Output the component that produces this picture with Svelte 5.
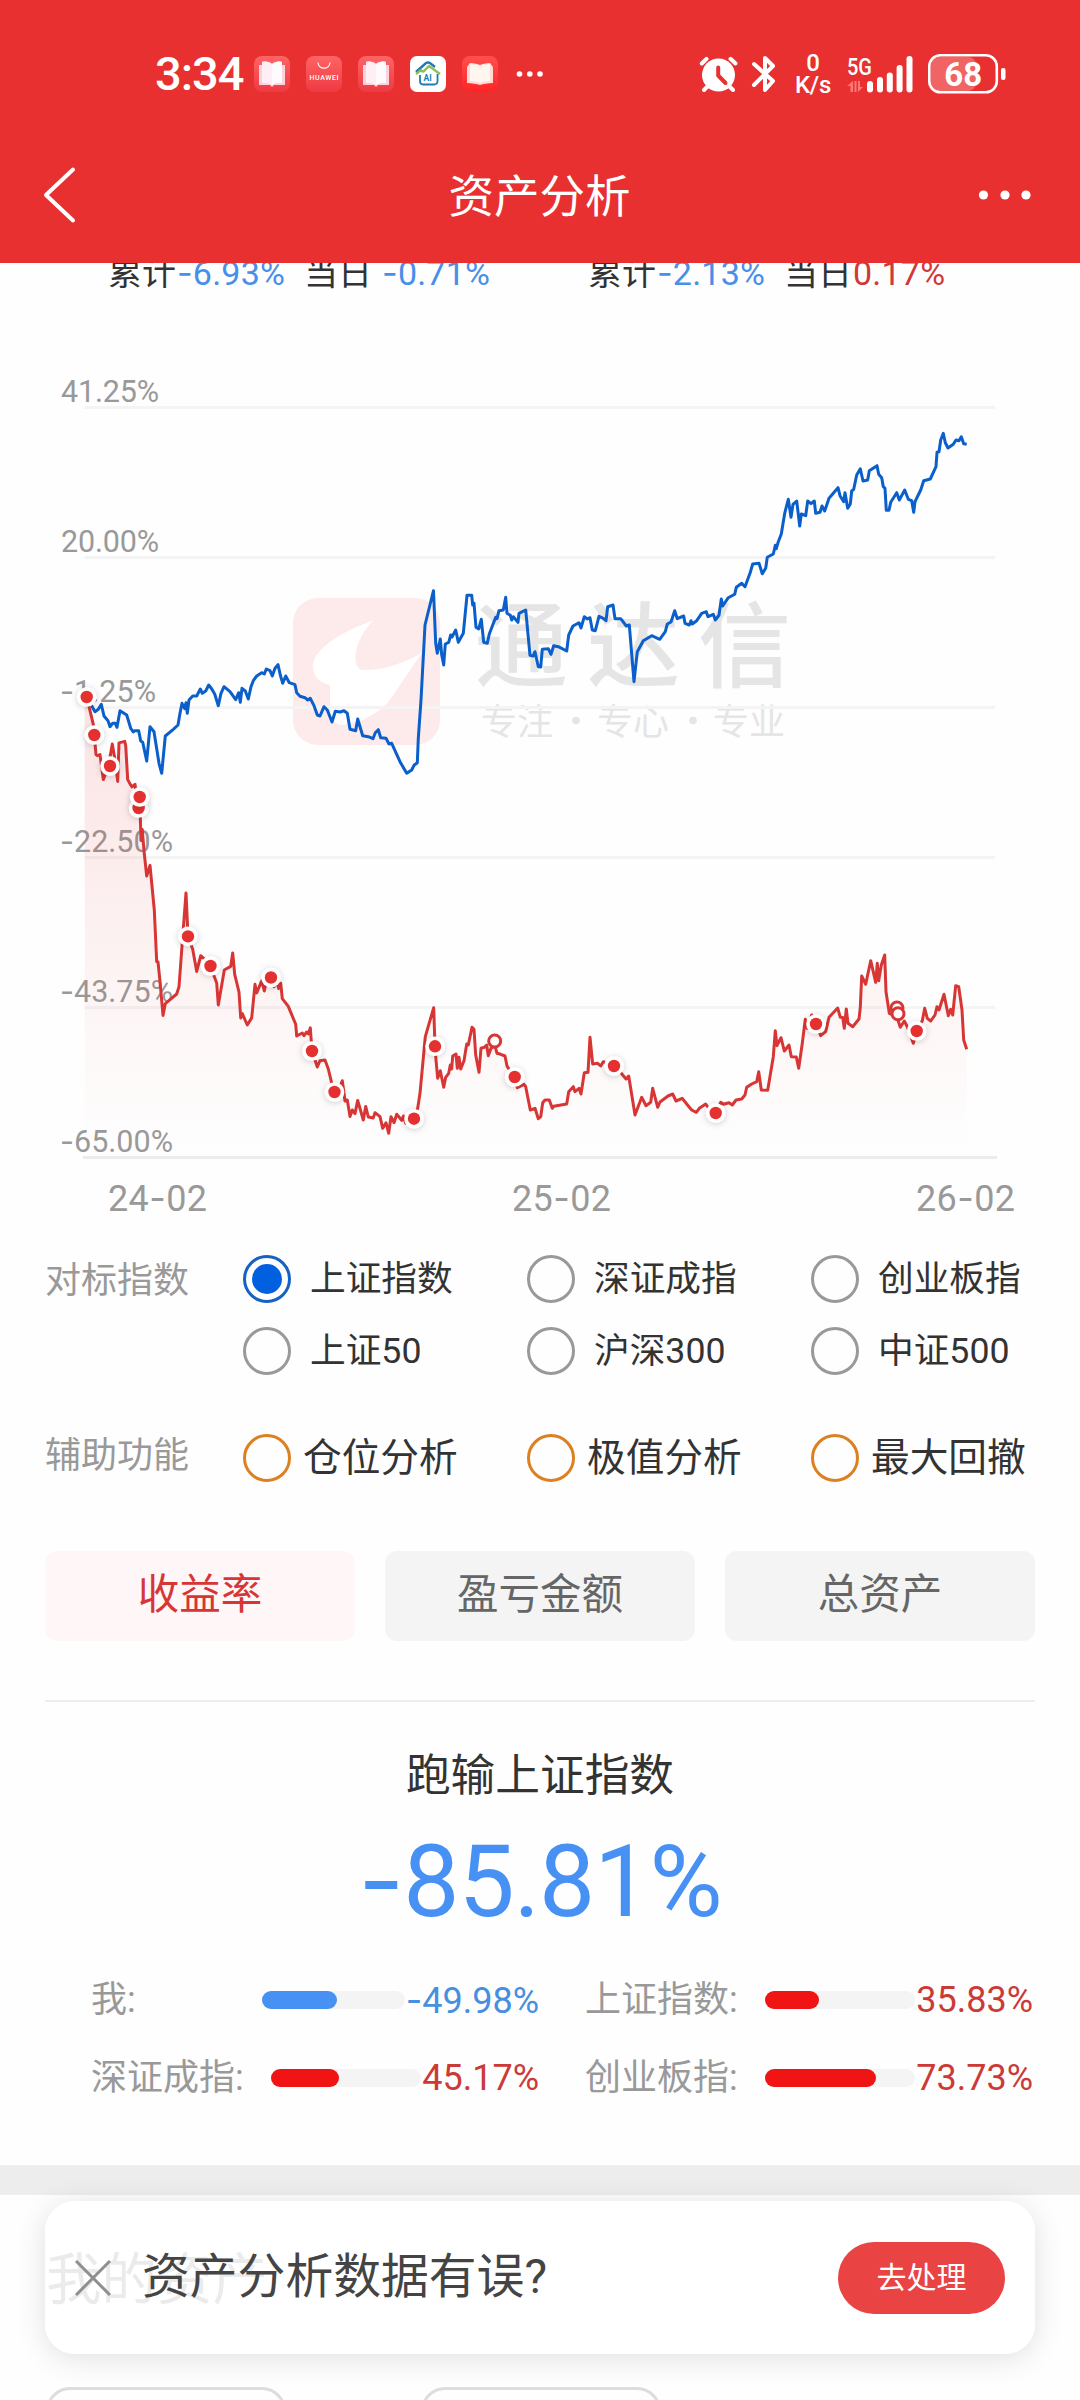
<script>
    let benchmark = 'sh';
    let tab = 'rate';

    const benchmarks = [
        { id: 'sh', name: '上证指数' },
        { id: 'sz', name: '深证成指' },
        { id: 'cy', name: '创业板指' },
        { id: 'sh50', name: '上证50' },
        { id: 'hs300', name: '沪深300' },
        { id: 'zz500', name: '中证500' }
    ];
    const tools = ['仓位分析', '极值分析', '最大回撤'];
    const tabs = [
        { id: 'rate', name: '收益率' },
        { id: 'profit', name: '盈亏金额' },
        { id: 'total', name: '总资产' }
    ];
    const results = [
        { name: '我:', value: -49.98, fill: 52.5 },
        { name: '上证指数:', value: 35.83, fill: 36 },
        { name: '深证成指:', value: 45.17, fill: 45.5 },
        { name: '创业板指:', value: 73.73, fill: 74 }
    ];

    // Chart labels
    const yAxis = [
        { y: 407.5, value: 41.25, width: 98 },
        { y: 557.5, value: 20, width: 98 },
        { y: 707.5, value: -1.25, width: 96 },
        { y: 857.5, value: -22.5, width: 113 },
        { y: 1007.5, value: -43.75, width: 113 },
        { y: 1157.5, value: -65, width: 113 }
    ];
    const xAxis = [
        { x: 108, year: '24', month: '02' },
        { x: 512, year: '25', month: '02' },
        { x: 916, year: '26', month: '02' }
    ];

    const percent = (value) => Math.abs(value).toFixed(2) + '%';

    // Index line
    const indexLine = `86.7,697 95,711.7 98.3,709.3 101.3,704.3 104,716 108,720.7 110,726.7 112.7,723.3 115.3,723.3 117,727.3
        120,710.7 126.7,715 130.7,728.3 133.3,732 134.7,730.7 138.7,730.7 140.7,741 142.7,742.3 146.7,761 150,726.7
        154,731.7 159,763.3 161.7,773.3 165.3,736 173.3,729.3 178,725 180,713.3 182,703.3 184.7,708.7 186,702.7
        187.3,713.3 189,700 192.7,696 196.7,696 200.3,689 202.3,693.3 205.7,691 208.7,685 211.3,688.3 214.7,694
        218.3,705.7 221,693.3 224,686.7 230,691.7 235.7,699.7 238.7,692.7 240.3,702.3 242,688.3 245.3,691 248.3,699
        251,686.7 253.3,680.7 256.7,676 261.7,672.7 264.3,674 266.3,669 270,670.7 272.3,676 275,668.3 278,664.7
        280.3,675 282.7,683.3 285.7,676 289.3,682.7 295,684.7 296.7,692.7 300,696.3 305,697.7 307.7,700 310.3,698.3
        314,705.7 317.3,715 320,716 324,706.7 327.3,710 332,722 335.3,711.3 340,712 344,710.7 347.3,713.3
        350,729.3 355.7,730.7 357.7,719 362.7,735.7 368.3,736.7 373,738.7 375.3,732.7 378.3,729.7 380.7,737.7 386,738.3
        389,744 391.7,743.3 400,761.7 406.7,773.3 411.7,770 414,765.3 417.3,762.7 418.3,738.3 421,700 425,625
        433.5,590.7 435.7,643.3 437.3,653.3 440.3,639 441.7,655 443.7,665 445.3,644 448.7,642.3 450.7,635 452,637 455.7,630
        458.3,642.3 463.3,633.3 467,595.3 471.7,595.3 472.7,605 474,603.3 476,627.3 478.7,629 481.3,619.3 483.7,642.3
        487.3,643.3 489.3,634 495.7,617.3 497,618.7 499,610.7 503.3,610 505.7,597.3 507,613.3 510.3,615.3 511.7,620
        513.3,616.7 518,622.3 519,613.3 525.7,610 530,655.3 533,656 535,651.7 538.3,666.7 540.7,667 542.3,649.3
        548.3,648.7 551,654.3 553.7,645.7 558.3,646.7 566.7,651 568.7,635 573,626 579,622.7 581,628 584.3,616.7
        587.3,619 590,617.7 592.3,630 595.3,630.7 599,616.3 603.3,618.3 606,620.7 607.7,606.7 613,605 615,618.7
        620.7,618.7 626.3,626 629.3,625 634,681.7 637.3,651.7 643.3,640.7 651.7,635.7 659.7,639.3 665.3,631.7 667.3,624
        671,622 674.7,610.7 677.3,618.7 683.7,616 685,623.3 689.3,625 691,620.7 692.3,624 696.7,620.7 701.7,613.3
        706.3,611.7 708,616.7 713.3,614.3 715.3,620 719,615.3 721.3,599 722.7,606 728.3,597.7 734.7,594.3 736.3,587.3
        741.7,583.3 745,586.7 750,573.3 752.7,564 759,563.3 762.3,573.7 765.7,568.3 767.3,557.3 773.3,554 775.3,545.3
        776.3,548.7 778.3,541.7 781.3,534 784.7,513.3 788.3,499.3 791,517.3 793,504.3 796.7,501 799.7,526 801.3,514
        805.7,515.7 807.7,501 811,503.7 814.3,501 815.7,513.3 820,512.3 822,506 824.7,511 829,498.3 838,487.7
        840,495.7 843.7,501.7 845,492.7 847.7,508.3 850.3,504 851.7,491 853.7,489.3 856.7,475 860.3,468.7 863,481
        867.7,480 869.3,470.7 877,465.7 878.7,474.3 881.7,477.7 883.3,486.7 885,488.3 886.3,510.3 889,510.3 890.7,502.3
        896.7,492.7 899.3,500 904.7,490 908.3,499.3 911.7,500.7 913.7,512.3 915,501.7 920.7,490 923.7,480.7 930.3,479
        936,466.7 937,452.3 939,451.7 940.7,440 943.3,433.3 945.3,442.7 948,448 953.3,444.3 956,440 959,440.7
        961.3,436.7 963.7,443.7 966.7,444.3`;

    // My return line
    const myLine = `86.7,697 93.3,724.3 94.3,735 96,754.6 97.3,755.7 100,754.6 103.3,779.6 108.3,767 112.3,743.9 115.3,761.8
        117.7,781.4 119,742.9 124.7,741.4 125.7,745.7 127.7,779.6 130,783.9 132,786.8 135,784.3 136.7,797.5 139,807.9
        139.7,797.5 140.3,817 141,840.4 142.3,829.6 144,851 146.7,876 150,865.4 154.3,910 156.7,961.8 158,961.8
        160,981.4 163,1015.4 165.3,1003.6 176.7,994 179,986.8 182.3,942 186,892.9 188,936.4 192.7,949.3 196.7,971.4
        200.7,955.7 203.3,958 210.3,966 216.7,983 218.3,1005 224.3,970 230.7,966.4 232.7,952.9 234.7,974.3 239,992
        240.7,1017.9 242.3,1013.6 247.3,1025 251.7,1017.9 255,984.3 256.7,992.9 261.7,980.7 264.3,991 266.7,979.6 271,977.5
        274,986.8 276.5,980 278.7,988.6 280.7,983.2 282.3,998.6 288.3,1006.4 295.7,1024.3 296.7,1036 302.3,1033 304,1035.7
        306.7,1032 308.5,1034 310.3,1027.9 312,1051 315,1060 317.3,1067 320,1060.7 325,1060 328.3,1069 331.7,1083
        334.3,1092 340,1086.8 342.3,1080.7 345,1101 347.3,1100 350,1116.4 352.3,1110 355,1113.6 357.7,1100.4 363.3,1120
        365.7,1106.4 368.3,1117 373.3,1117.9 375,1112.7 380,1116.7 382.7,1128.3 386,1122.7 388.7,1133.3 391,1116.7 394,1122.7
        396.7,1114.3 401.7,1120.3 403.5,1116 405.7,1123.3 409,1116.7 414,1118.7 417.7,1108.3 420,1093.3 425.3,1036.7 433.7,1007.7
        435,1046.3 436,1060 437.7,1078.3 440.3,1070.7 443.7,1087.3 445.7,1077.3 448.7,1073.3 450.3,1065 451.7,1069 452.7,1056
        456,1054 457.3,1068.3 459,1057.3 460.7,1069 464,1060.7 466.7,1044 468.3,1045 472,1027.3 474,1029.3 475.7,1055
        479,1072.3 481,1048.3 484.3,1047.3 486.7,1045 488.3,1055.7 491,1048.3 495,1046 497,1053.3 500.7,1054.3 505,1056
        507,1066 509,1069.3 514.7,1077 517.3,1087.7 524,1084.3 525.7,1086.7 530.3,1110 535,1108.3 538.3,1118.7 540.7,1116.7
        542.7,1102.7 545,1100 549.3,1100 552.3,1108.3 553.7,1106.3 566.7,1104 568.7,1091.7 573.3,1086.7 575,1091.7 579,1088.3 581,1094
        584.3,1072.7 588,1072.3 590,1037.3 592.7,1064 597.7,1063.3 600.7,1066 603.3,1061.7 614,1066 620,1071.7 622.7,1075
        626,1079 628.7,1076 635,1115 641.7,1097.3 646,1105.7 650.7,1102.3 652.7,1088.3 657.7,1107.3 660,1102 668,1096 672.7,1094
        676,1101 682.3,1098.3 688.3,1106 691.7,1110 696.3,1112.3 699.3,1108.3 705.7,1104 710,1110 715.7,1113 720.7,1102.3
        723.3,1104.3 729,1102.7 732.3,1105 736,1100 741.7,1099 745,1095 746.7,1087.3 751.7,1084 756.7,1081.7 758.7,1071.7
        761.3,1090 767.7,1090.3 773.3,1056.7 775.3,1030.7 777,1045.7 781,1037.7 784.3,1051 789,1045 791.3,1056.7 796.3,1057
        798.7,1068.3 802.3,1043.3 805.3,1019.3 807.3,1028.3 811.7,1015 816,1024 820.7,1035.7 825.7,1031.7 829,1017.3 837.7,1008
        840.3,1017.3 842.7,1017.5 844.3,1028.3 846.3,1009 848,1023.3 852.7,1026.7 859,1019 860.3,1007.3 861.7,976 865.7,984.3
        870.7,960.7 875.7,982.3 877.3,963.3 878.7,980.7 881.3,965 884.7,955 886,991.7 889.3,1013.3 893.3,1015 897.3,1018.3
        900.3,1027.3 904.3,1021 907.3,1026.7 913.3,1043.3 916.7,1031 922.3,1020.7 924.7,1008.3 927.3,1018.3 930.7,1021 935,1015
        937,1006.7 939,1010 944,994.3 948.3,1015.7 950.7,1009.3 952.7,1015 955.7,985.7 958.7,986.7 962,1010 963.7,1040 966.7,1049.3`;

    const trades = [
        [86.7, 697], [94.3, 735], [110, 766], [138.6, 808], [139.7, 797], [188, 936.4], [210.5, 966], [271, 977.5],
        [312, 1051], [334.5, 1092], [414, 1118.7], [435, 1046.3], [514.7, 1077], [614, 1066], [715.7, 1113],
        [816, 1024], [916.7, 1031]
    ];
    const transfers = [[494.7, 1041], [897, 1008], [898, 1013.7]];
</script>

<div class="page">
    <header>
        <div class="status">
            <span class="time">3:34</span>
            <div class="apps">
                {#each ['book', 'huawei', 'book', 'home', 'read'] as app}
                    <svg width="36" height="36" viewBox="0 0 36 36">
                        {#if app === 'book'}
                            <rect width="36" height="36" rx="8" fill="url(#appBg)" />
                            <path d="M5 9H8V6C12 5 16 6 18 8C20 6 24 5 28 6V9H31V29H20L18 31L16 29H5Z" fill="#fbd3de" />
                            <path d="M8 6C12 5 16 6 18 8V29C15 27 11 27 8 27Z" fill="#ffeef4" />
                            <path d="M28 6C24 5 20 6 18 8V29C21 27 25 27 28 27Z" fill="#fffafc" />
                        {:else if app === 'huawei'}
                            <rect width="36" height="36" rx="8" fill="url(#appBg)" />
                            <path d="M12 6.500C12.500 14 23.500 14 24 6.500" fill="none" stroke="#fff" stroke-width="1.200" />
                            <text x="3.500" y="23.500" font-size="7" font-weight="500" fill="#fff" textLength="29">HUAWEI</text>
                        {:else if app === 'home'}
                            <rect width="36" height="36" rx="7" fill="#fff" />
                            <path d="M6 16L16 7Q18 6 20 7L25 11" fill="none" stroke="#1f78b8" stroke-width="2.400" />
                            <path d="M6 18L11 14Q13 17 15 14L19 10L30 18" fill="none" stroke="#8cc152" stroke-width="2.400" />
                            <path d="M10 19V25Q10 28.500 13 28.500H24Q27.500 28.500 27.500 25V18" fill="none" stroke="#1b7fb5" stroke-width="1.800" />
                            <text x="13.500" y="25" font-size="8.500" font-weight="700" fill="#1b7fb5">AI</text>
                        {:else}
                            <rect width="36" height="36" rx="8" fill="url(#readBg)" />
                            <path d="M5 11L8 7C12 7 16 8 18 9C20 8 24 7 28 7L31 11V27C26 27 21 28 18 29C15 28 10 27 5 27Z" fill="#ffd9d3" />
                            <path d="M8 8C12 8 16 9 18 10C20 9 24 8 28 8V25C24 25 20 26 18 27C16 26 12 25 8 25Z" fill="#fff6ef" />
                        {/if}
                        <defs>
                            <linearGradient id="appBg" x1="0" y1="0" x2="0" y2="1">
                                <stop offset="0" stop-color="#ff6464" />
                                <stop offset="1" stop-color="#ef3a42" />
                            </linearGradient>
                            <linearGradient id="readBg" x1="0" y1="0" x2="0" y2="1">
                                <stop offset="0" stop-color="#ff4f4f" />
                                <stop offset="1" stop-color="#ff2424" />
                            </linearGradient>
                        </defs>
                    </svg>
                {/each}
                <svg width="30" height="8" viewBox="0 0 30 8" fill="#fff">
                    <circle cx="5.500" cy="4" r="2.800" />
                    <circle cx="15.800" cy="4" r="2.800" />
                    <circle cx="26" cy="4" r="2.800" />
                </svg>
            </div>
            <div class="system">
                <svg class="alarm" width="40" height="38" viewBox="0 0 40 38" fill="none" stroke="#fff" stroke-linecap="round">
                    <circle cx="19.500" cy="20" r="16.500" fill="#fff" stroke="none" />
                    <path d="M2.800 8.500L7.500 3.800M36.500 8.500L31.500 3.800M9 31L5 35M30 31L34 35" stroke-width="4" />
                    <path d="M19.200 12.500V20.500L26.500 28" stroke="#e83030" stroke-width="4" stroke-linejoin="round" />
                </svg>
                <svg class="bt" width="26" height="40" viewBox="0 0 26 40" fill="none" stroke="#fff" stroke-width="4" stroke-linecap="round" stroke-linejoin="round">
                    <path d="M3 10L22 27L14 36V4L22 12L3 31" />
                </svg>
                <div class="speed"><span>0</span><span>K/s</span></div>
                <svg class="signal" width="68" height="40" viewBox="0 0 68 40" fill="#fff">
                    <text x="0" y="20.500" font-size="24" font-weight="500" textLength="25" lengthAdjust="spacingAndGlyphs">5G</text>
                    <path d="M0 32L6 27V38H3.500V32ZM7.500 27H9.500V38H7.500ZM11 27H13V33H16L11 38Z" fill="#f77" />
                    <rect x="20" y="27" width="6" height="11.500" rx="3" />
                    <rect x="30" y="23" width="6" height="15.500" rx="3" />
                    <rect x="39.800" y="18.500" width="6" height="20" rx="3" />
                    <rect x="49.600" y="11" width="6" height="27.500" rx="3" />
                    <rect x="59.500" y="2" width="6" height="36.500" rx="3" />
                </svg>
                <svg class="battery" width="78" height="40" viewBox="0 0 78 40">
                    <rect x="3" y="3" width="45" height="34" rx="8" fill="#f06464" />
                    <rect x="1.300" y="1.300" width="67.500" height="37" rx="11" fill="none" stroke="#fff" stroke-width="2.600" />
                    <rect x="73" y="14" width="4.500" height="12" rx="2" fill="#fff" />
                    <text x="35.300" y="32" font-size="33" font-weight="700" fill="#fff" text-anchor="middle">68</text>
                </svg>
            </div>
        </div>
        <nav>
            <svg width="34" height="58" viewBox="0 0 34 58" fill="none" stroke="#fff" stroke-width="4" stroke-linecap="round" stroke-linejoin="round">
                <path d="M30 3.500L3 29L30 54.500" />
            </svg>
            <h1>资产分析</h1>
            <svg width="54" height="12" viewBox="0 0 54 12" fill="#fff">
                <circle cx="5.500" cy="6" r="4.600" />
                <circle cx="27" cy="6" r="4.600" />
                <circle cx="48" cy="6" r="4.600" />
            </svg>
        </nav>
    </header>

    <div class="summary">
        <p>累计<span class="down"><b>-</b>6.93%</span><i></i>当日<i class="thin"></i><span class="down"><b>-</b>0.71%</span></p>
        <p>累计<span class="down"><b>-</b>2.13%</span><i></i>当日<span class="up">0.17%</span></p>
    </div>

    <svg class="chart" width="1080" height="900" viewBox="0 340 1080 900">
        <defs>
            <linearGradient id="area" gradientUnits="userSpaceOnUse" x1="0" y1="697" x2="0" y2="1157">
                <stop offset="0" stop-color="#e93030" stop-opacity="0.13" />
                <stop offset="1" stop-color="#e93030" stop-opacity="0" />
            </linearGradient>
            <filter id="glow" x="-60%" y="-60%" width="220%" height="220%">
                <feDropShadow dx="0" dy="1" stdDeviation="3" flood-color="#000" flood-opacity="0.2" />
            </filter>
        </defs>

        <!-- watermark -->
        <rect x="293" y="598" width="147" height="147" rx="25" fill="#fdeaea" />
        <path d="M372.700 620.700C345 630 313 648 313 666C313 680 325 684 330 685V712Q331 724 342 725C362 723 380 712 390 700L421.700 653C400 665 380 671 362 670C350 665 355 640 372.700 620.700Z" fill="#fff" />
        <text class="brand" x="475 587 698" y="680">通达信</text>
        <g class="slogan">
            <text x="481" y="735">专注</text>
            <circle cx="576" cy="720.500" r="3.800" />
            <text x="597" y="735">专心</text>
            <circle cx="693" cy="720.500" r="3.800" />
            <text x="713" y="735">专业</text>
        </g>

        {#each yAxis as row, i}
            <line x1={i === 5 ? 83 : 84.7} x2={i === 5 ? 997 : 995} y1={row.y} y2={row.y} class="grid" class:base={i === 5} />
            <text class="y-label" x={row.value < 0 ? 60 : 61} y={row.y - 5.5} textLength={row.width}>{#if row.value < 0}<tspan class="dash">-</tspan>{/if}{percent(row.value)}</text>
        {/each}
        {#each xAxis as col}
            <text class="x-label" x={col.x} y="1211" textLength="99">{col.year}<tspan class="dash">-</tspan>{col.month}</text>
        {/each}

        <polygon points={`84.7,1157 84.7,697 ${myLine} 966.7,1157`} fill="url(#area)" />
        <polyline points={indexLine} class="line" stroke="#0b5fcb" />
        <polyline points={myLine} class="line" stroke="#d83535" />
        {#each trades as [x, y]}
            <circle cx={x} cy={y} r="9.800" fill="#fff" filter="url(#glow)" />
            <circle cx={x} cy={y} r="6.200" fill="#e53030" />
        {/each}
        {#each transfers as [x, y]}
            <circle cx={x} cy={y} r="6" fill="#fff" stroke="#d83535" stroke-width="3" />
        {/each}
    </svg>

    <section class="options">
        <h2>对标指数</h2>
        <div class="choices">
            {#each benchmarks as item}
                <button class="choice" class:active={benchmark === item.id} on:click={() => (benchmark = item.id)}>
                    <span class="radio"></span>{item.name}
                </button>
            {/each}
        </div>
    </section>
    <section class="options tools">
        <h2>辅助功能</h2>
        <div class="choices">
            {#each tools as tool}
                <button class="choice tool"><span class="radio"></span>{tool}</button>
            {/each}
        </div>
    </section>

    <div class="tabs">
        {#each tabs as item}
            <button class:active={tab === item.id} on:click={() => (tab = item.id)}>{item.name}</button>
        {/each}
    </div>

    <section class="result">
        <h3>跑输上证指数</h3>
        <div class="total"><b>-</b>85.81%</div>
        <div class="bars">
            {#each results as row}
                <div class="bar-row" class:minus={row.value < 0}>
                    <span class="name">{row.name}</span>
                    <div class="bar"><div class="fill" style="width: {row.fill}%"></div></div>
                    <span class="value">{#if row.value < 0}<b>-</b>{/if}{percent(row.value)}</span>
                </div>
            {/each}
        </div>
    </section>

    <section class="assets">
        <h2>我的资产</h2>
        <div class="cards"><div></div><div></div></div>
    </section>

    <div class="toast">
        <svg width="36" height="36" viewBox="0 0 36 36" stroke="#8f8f8f" stroke-width="3">
            <path d="M1 1L35 35M35 1L1 35" />
        </svg>
        <p>资产分析数据有误?</p>
        <button>去处理</button>
    </div>
</div>

<style>
    :global(body) {
        background: #fefefe;
    }

    .page {
        position: relative;
        width: 1080px;
        height: 2400px;
        overflow: hidden;
        background: #fefefe;
        color: #333;
        font-family: Roboto, "Noto Sans CJK SC", sans-serif;
    }

    h1, h2, h3, p {
        margin: 0;
        font-weight: 400;
    }

    button {
        padding: 0;
        border: none;
        background: none;
        font-family: inherit;
        color: inherit;
    }

    /* wide minus sign */
    b, .dash {
        font-family: Inter, sans-serif;
        font-weight: 400;
    }

    /* Header */
    header {
        height: 263px;
        box-sizing: border-box;
        padding-top: 44px;
        background: #e83030;
        color: #fff;
    }

    .status {
        display: flex;
        align-items: center;
        height: 60px;
        margin-bottom: 44px;
        padding: 0 74px 0 155px;
    }

    .time {
        width: 99px;
        font-size: 47px;
        font-weight: 500;
        line-height: 60px;
        letter-spacing: -1px;
    }

    .apps {
        display: flex;
        align-items: center;
        gap: 16px;
    }

    .system {
        display: flex;
        align-items: center;
        margin-left: auto;
    }

    .alarm {
        margin-right: 12px;
    }

    .bt {
        margin-right: 16px;
    }

    .speed {
        display: flex;
        flex-direction: column;
        align-items: center;
        width: 40px;
        margin-right: 14px;
        font-size: 24px;
        font-weight: 500;
        line-height: 22px;
        letter-spacing: -0.3px;
    }

    .signal {
        margin-right: 13px;
    }

    nav {
        display: flex;
        align-items: center;
        justify-content: space-between;
        height: 94px;
        padding: 0 48px 0 43px;
    }

    h1 {
        margin-right: -24px;
        padding-top: 5px;
        font-size: 45.5px;
        line-height: 89px;
    }

    /* Scrolled summary under the header */
    .summary {
        display: flex;
        height: 77px;
        overflow: hidden;
        font-size: 34px;
        line-height: 40px;
    }

    .summary p {
        display: flex;
        flex: none;
        width: 480px;
        margin-top: -10px;
        padding-left: 108px;
        box-sizing: border-box;
        white-space: nowrap;
    }

    .summary span {
        margin-left: 1px;
        letter-spacing: 0.2px;
    }

    .summary i {
        flex: none;
        width: 19px;
    }

    .summary .thin {
        width: 9px;
    }

    .down {
        color: #478fe8;
    }

    .up {
        color: #cf3a38;
    }

    /* Chart */
    .chart {
        display: block;
    }

    .grid {
        stroke: #f4f4f4;
        stroke-width: 3;
    }

    .base {
        stroke: #ececec;
    }

    .line {
        fill: none;
        stroke-width: 3;
        stroke-linejoin: round;
    }

    .y-label {
        font-size: 30.5px;
        fill: #999;
    }

    .x-label {
        font-size: 36px;
        fill: #999;
    }

    .brand {
        font-size: 93px;
        font-weight: 500;
        fill: #e5e5e5;
    }

    .slogan {
        font-size: 36px;
        fill: #e5e5e5;
    }

    /* Options */
    .options {
        display: flex;
        padding: 0 0 0 45px;
    }

    .options h2 {
        flex: none;
        width: 198px;
        font-size: 36px;
        line-height: 83px;
        color: #999;
    }

    .choices {
        display: grid;
        flex: none;
        grid-template-columns: repeat(3, 284px);
        grid-auto-rows: 72px;
        padding-top: 3px;
    }

    .choice {
        display: flex;
        align-items: center;
        gap: 19px;
        font-size: 35.7px;
        line-height: 68px;
        white-space: nowrap;
    }

    .radio {
        display: flex;
        width: 42px;
        height: 42px;
        flex: none;
        border: 3px solid #999;
        border-radius: 50%;
    }

    .active .radio {
        border-color: #1561c4;
    }

    .active .radio::after {
        content: '';
        width: 30px;
        height: 30px;
        margin: auto;
        border-radius: 50%;
        background: #0060e0;
    }

    .tools {
        margin-top: 32px;
    }

    .tools h2 {
        height: 75px;
        line-height: 75px;
    }

    .tool {
        gap: 12px;
        font-size: 38.7px;
    }

    .tool .radio {
        border-color: #dd8022;
    }

    /* Tabs */
    .tabs {
        display: grid;
        grid-template-columns: repeat(3, 310px);
        gap: 30px;
        margin: 57px 45px 0;
        padding-bottom: 59px;
        border-bottom: 2px solid #eee;
    }

    .tabs button {
        height: 90px;
        padding-bottom: 11px;
        border-radius: 12px;
        background: #f4f4f4;
        font-size: 41.5px;
        color: #666;
    }

    .tabs .active {
        background: #fff7f7;
        color: #d63636;
    }

    /* Result */
    .result {
        height: 463px;
        border-bottom: 30px solid #ededed;
    }

    h3 {
        padding-top: 42px;
        font-size: 44.7px;
        line-height: 64px;
        text-align: center;
    }

    .total {
        margin-top: 12px;
        font-size: 100px;
        line-height: 120px;
        letter-spacing: -1px;
        text-align: center;
        color: #4791f5;
    }

    .bars {
        display: grid;
        grid-template-columns: 448px 448px;
        grid-auto-rows: 78px;
        column-gap: 46px;
        margin: 19px 0 0 91px;
    }

    .bar-row {
        display: flex;
        align-items: center;
        font-size: 36px;
        color: #999;
    }

    .name {
        line-height: 72px;
        margin-right: auto;
    }

    .bar {
        width: 150px;
        height: 18px;
        border-radius: 9px;
        background: #f4f4f4;
    }

    .fill {
        height: 18px;
        border-radius: 9px;
        background: #f01414;
    }

    .value {
        margin-left: 1px;
        color: #cc3a38;
    }

    .minus .bar {
        width: 143px;
    }

    .minus .fill {
        background: #4791f5;
    }

    .minus .value {
        color: #478fe0;
    }

    /* Assets */
    .assets {
        padding: 44px 46px 0;
    }

    .assets h2 {
        font-size: 55.5px;
        line-height: 84px;
    }

    .cards {
        display: flex;
        gap: 135px;
        margin-top: 64px;
    }

    .cards div {
        width: 234px;
        height: 70px;
        border: 3px solid #ddd;
        border-radius: 24px;
    }

    /* Floating notice */
    .toast {
        position: absolute;
        left: 45px;
        top: 2201px;
        display: flex;
        align-items: center;
        width: 990px;
        height: 153px;
        box-sizing: border-box;
        padding: 0 30px;
        border-radius: 30px;
        background: rgba(255, 255, 255, 0.9);
        box-shadow: 0 4px 30px rgba(0, 0, 0, 0.12);
    }

    .toast p {
        margin-left: 31px;
        font-size: 47.8px;
        line-height: 153px;
        color: #444;
    }

    .toast button {
        width: 167px;
        height: 72px;
        margin-left: auto;
        padding-bottom: 5px;
        border-radius: 36px;
        background: #ea4343;
        font-size: 30px;
        color: #fff;
    }
</style>
